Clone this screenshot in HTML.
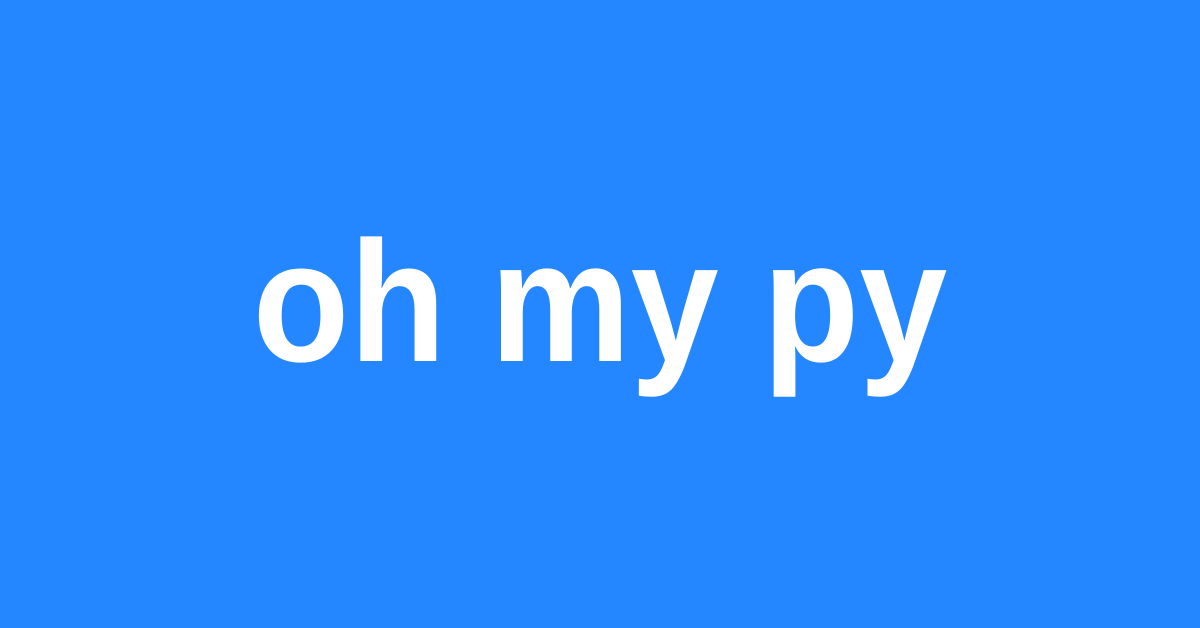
<!DOCTYPE html>
<html><head><meta charset="utf-8"><style>
html,body{margin:0;padding:0;}
body{width:1200px;height:628px;background:#2487FF;position:relative;overflow:hidden;}
.t{position:absolute;left:0;width:1200px;top:216px;text-align:center;font-family:"Liberation Sans",sans-serif;font-weight:bold;font-size:172px;line-height:1;color:#fff;transform:scaleX(0.92);transform-origin:600px 0;white-space:nowrap;}
</style></head><body><div class="t">oh my py</div></body></html>
